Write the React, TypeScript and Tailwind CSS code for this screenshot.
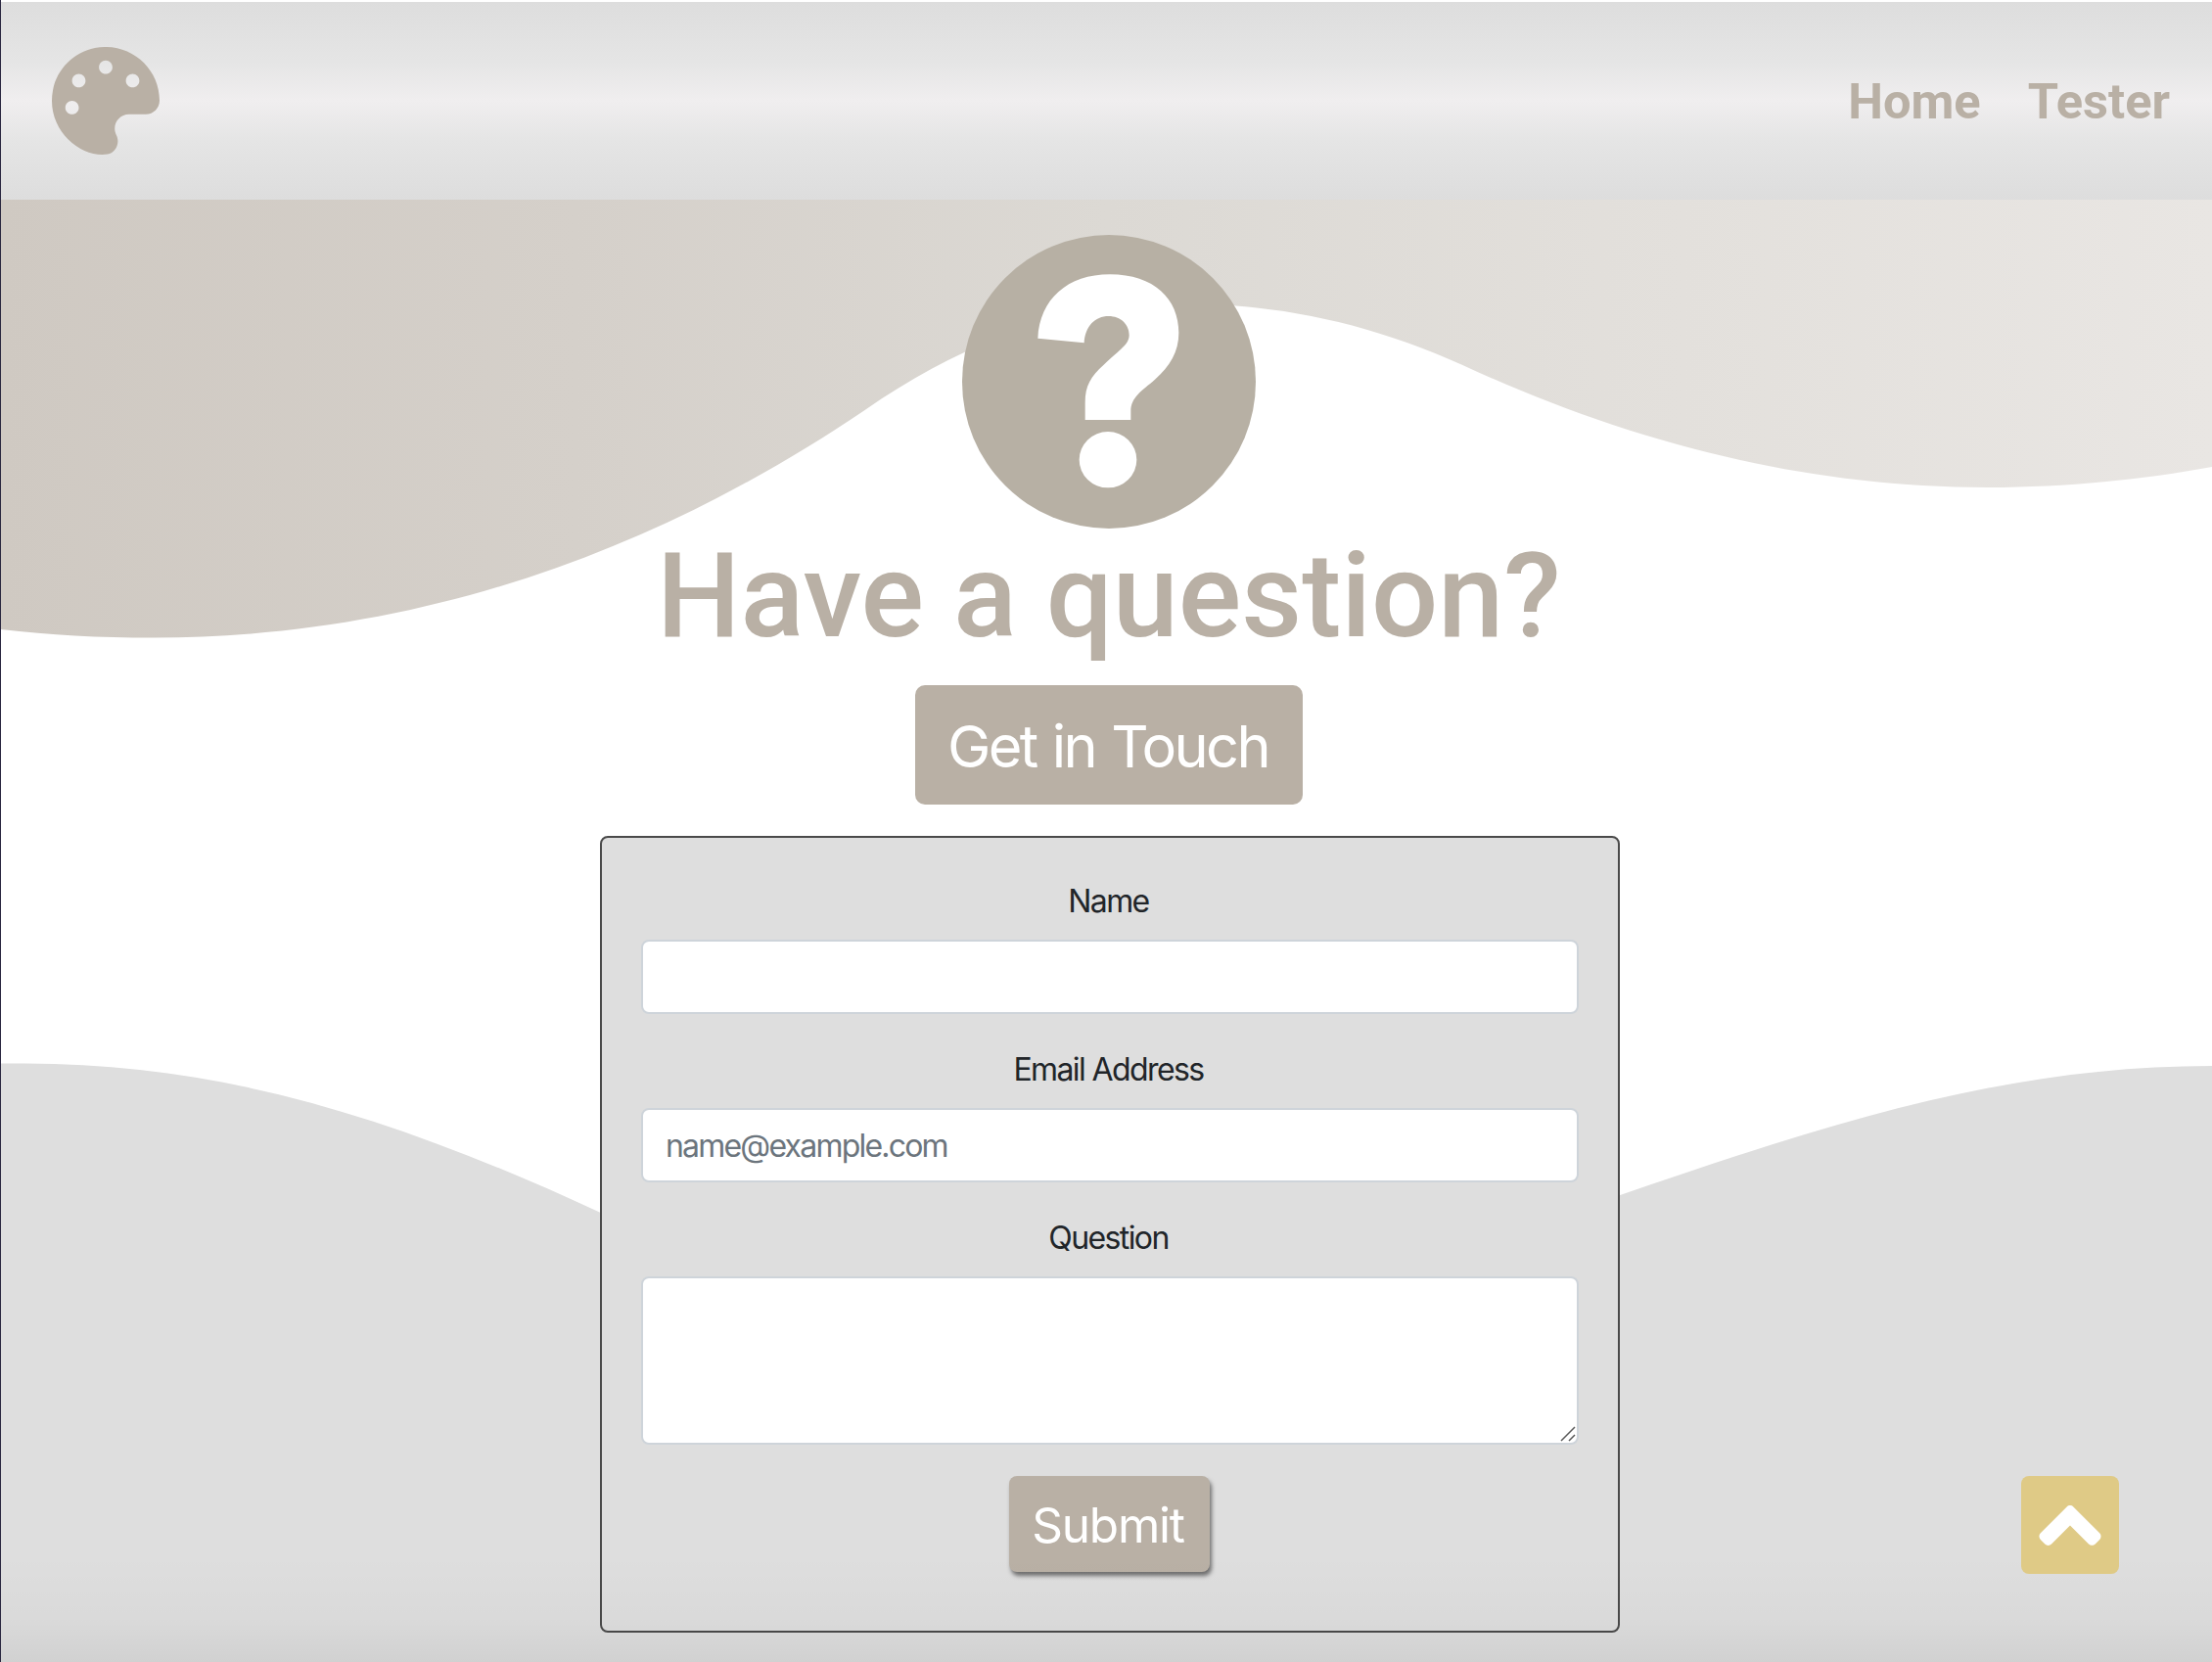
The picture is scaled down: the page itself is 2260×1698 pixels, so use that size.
import { FaAngleUp, FaPalette } from "react-icons/fa";

function Waves() {
  return (
    <svg
      className="absolute inset-0 h-full w-full"
      viewBox="0 0 2260 1698"
      preserveAspectRatio="none"
      aria-hidden="true"
    >
      <defs>
        <linearGradient id="sand" x1="0" x2="1" y1="0" y2="0">
          <stop offset="0" stopColor="#cfc9c2" />
          <stop offset="0.26" stopColor="#d5d0ca" />
          <stop offset="0.5" stopColor="#dcd9d4" />
          <stop offset="0.76" stopColor="#e3e0dc" />
          <stop offset="1" stopColor="#e9e6e3" />
        </linearGradient>
      </defs>
      <path
        fill="url(#sand)"
        d="M0 204V643C50 649 100 651.5 156 651.5C460 651.5 704 540 883 419C1000 337 1110 310 1200 310C1300 310 1394 328 1494 373C1650 445 1830 498 2030 498C2110 498 2190 490 2260 477V204Z"
      />
      <path
        fill="#dedede"
        d="M0 1086.5L25 1086.5C230 1086.5 410 1145 613 1239L1130 1360L1655 1221C1870 1147 2050 1089 2260 1089V1698H0Z"
      />
    </svg>
  );
}

function QuestionBadge() {
  return (
    <svg className="size-[300px]" viewBox="69 60 900 900" aria-hidden="true">
      <circle cx="519" cy="510" r="450" fill="#b7b0a4" />
      <path
        fill="#fff"
        d="M301 377C307 257 392 181 522 181C658 181 733 257 733 360C733 418 706 462 660 503C620 538 586 557 586 600V627H446V575C446 520 464 494 503 458C556 409 581 395 581 367C581 334 555 309 518 309C476 309 446 340 443 391Z"
      />
      <ellipse cx="516" cy="749" rx="88" ry="86" fill="#fff" />
    </svg>
  );
}

const label =
  "block h-12 pt-px pr-[3px] text-center text-[32px] leading-12 tracking-[-1.6px] text-[#212529]";
const field =
  "block w-full rounded-lg border-2 border-[#ced4da] bg-white px-[23px] text-[32px] tracking-[-1.8px] placeholder:text-[#6c757d] placeholder:opacity-100 outline-none";

export default function App() {
  return (
    <div className="relative flex h-[1698px] w-full flex-col overflow-hidden border-l border-[#2a2740] bg-white font-['Inter',sans-serif]">
      <Waves />

      <header className="relative mt-[2px] flex h-[202px] shrink-0 items-center justify-between bg-[linear-gradient(#dddddd,#e5e5e5_30%,#f0eeef_50%,#e5e5e5_70%,#dddddd)] pr-[43px] pl-[52px]">
        <FaPalette className="size-[110px] text-[#b9b0a5]" />
        <nav className="flex gap-[48px] pt-px font-['Roboto',sans-serif] text-[50.6px] leading-[60px] font-bold text-[#b9b0a5]">
          <a>Home</a>
          <a>Tester</a>
        </nav>
      </header>

      <main className="relative flex flex-col items-center pt-9 pl-[5px]">
        <QuestionBadge />
        <h1 className="-mt-[3px] h-[147px] font-['Roboto',sans-serif] text-[120.4px] leading-[144px] font-medium whitespace-nowrap text-[#b9b0a5]">
          Have a question?
        </h1>
        <button className="mt-4 flex h-[122px] w-[396px] items-center justify-center rounded-[10px] bg-[#b9b0a5] pt-[3px] pr-[2px] text-[59.5px] tracking-[-2.6px] [word-spacing:2px] whitespace-nowrap text-white">
          Get in Touch
        </button>

        <form className="mt-8 ml-[2px] flex h-[814px] w-[1042px] flex-col items-center rounded-lg border-2 border-[#4a4a4a] bg-[#dedede] px-10 pt-10">
          <div className="w-full">
            <label className={label}>Name</label>
            <input className={`${field} mt-4 h-[76px]`} />
          </div>
          <div className="mt-8 w-full">
            <label className={label}>Email Address</label>
            <input
              className={`${field} mt-4 h-[76px]`}
              placeholder="name@example.com"
            />
          </div>
          <div className="mt-8 w-full">
            <label className={label}>Question</label>
            <div className="relative mt-4">
              <textarea className={`${field} h-[172px] resize-none`} />
              <svg
                className="absolute right-[3px] bottom-[3px] size-4"
                viewBox="0 0 16 16"
                stroke="#5a5a5a"
                strokeWidth="1.5"
                aria-hidden="true"
              >
                <path d="M1 15L15 1M9 15L15 9" />
              </svg>
            </div>
          </div>
          <button
            type="button"
            className="mt-8 mr-px flex h-[98px] w-[205px] items-center justify-center rounded-lg bg-[#b9b0a5] pt-[3px] pr-[3px] text-[49.5px] tracking-[-1.2px] text-white shadow-[2px_4px_4px_rgba(0,0,0,0.5)]"
          >
            Submit
          </button>
        </form>
      </main>

      <div className="pointer-events-none absolute inset-x-0 bottom-0 h-[110px] bg-[linear-gradient(rgba(0,0,0,0),rgba(0,0,0,0.02)_60%,rgba(0,0,0,0.06))]" />

      <button className="absolute right-[95px] bottom-[90px] flex size-[100px] items-center justify-center rounded-lg bg-[#dfca86] text-white">
        <FaAngleUp className="size-[101px]" />
      </button>
    </div>
  );
}
